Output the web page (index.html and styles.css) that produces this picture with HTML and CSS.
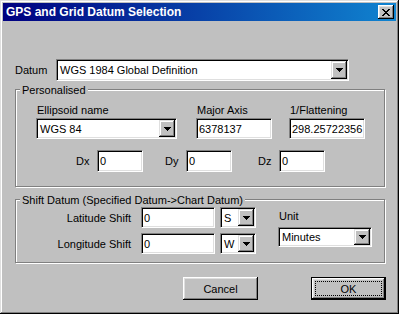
FILE: index.html
```html
<!DOCTYPE html>
<html lang="en">
<head>
    <meta charset="UTF-8">
    <title>GPS and Grid Datum Selection</title>
    <link rel="stylesheet" href="styles.css">
</head>
<body>
    <div class="window">
        <!-- Caption -->
        <div class="titlebar">
            <span class="title">GPS and Grid Datum Selection</span>
            <span class="close-btn">
                <svg width="8" height="7" viewBox="0 0 8 7" shape-rendering="crispEdges">
                    <path d="M0 0h2v1h-2zM6 0h2v1h-2zM1 1h2v1h-2zM5 1h2v1h-2zM2 2h4v1h-4zM3 3h2v1h-2zM2 4h4v1h-4zM1 5h2v1h-2zM5 5h2v1h-2zM0 6h2v1h-2zM6 6h2v1h-2z" fill="#000"/>
                </svg>
            </span>
        </div>

        <!-- Datum choice -->
        <div class="datum-row">
            <span class="datum-label">Datum</span>
            <div class="combo combo-datum">
                <span class="combo-text">WGS 1984 Global Definition</span>
                <span class="drop"><svg width="7" height="4" viewBox="0 0 7 4" shape-rendering="crispEdges"><path d="M0 0h7v1h-7zM1 1h5v1h-5zM2 2h3v1h-3zM3 3h1v1h-1z"/></svg></span>
            </div>
        </div>

        <!-- Personalised group -->
        <div class="group group-personal">
            <span class="legend">Personalised</span>
            <div class="params">
                <div class="param param-ellipsoid">
                    <span class="param-label">Ellipsoid name</span>
                    <div class="combo">
                        <span class="combo-text">WGS 84</span>
                        <span class="drop"><svg width="7" height="4" viewBox="0 0 7 4" shape-rendering="crispEdges"><path d="M0 0h7v1h-7zM1 1h5v1h-5zM2 2h3v1h-3zM3 3h1v1h-1z"/></svg></span>
                    </div>
                </div>
                <div class="param param-axis">
                    <span class="param-label">Major Axis</span>
                    <div class="edit">6378137</div>
                </div>
                <div class="param param-flat">
                    <span class="param-label">1/Flattening</span>
                    <div class="edit">298.25722356</div>
                </div>
            </div>
            <div class="deltas">
                <div class="delta"><span class="delta-label">Dx</span><div class="edit edit-small">0</div></div>
                <div class="delta delta-y"><span class="delta-label">Dy</span><div class="edit edit-small">0</div></div>
                <div class="delta delta-z"><span class="delta-label">Dz</span><div class="edit edit-small">0</div></div>
            </div>
        </div>

        <!-- Shift group -->
        <div class="group group-shift">
            <span class="legend">Shift Datum (Specified Datum-&gt;Chart Datum)</span>
            <div class="shift-rows">
                <span class="shift-label">Latitude Shift</span>
                <div class="edit edit-shift">0</div>
                <div class="combo combo-dir">
                    <span class="combo-text">S</span>
                    <span class="drop"><svg width="7" height="4" viewBox="0 0 7 4" shape-rendering="crispEdges"><path d="M0 0h7v1h-7zM1 1h5v1h-5zM2 2h3v1h-3zM3 3h1v1h-1z"/></svg></span>
                </div>
                <span class="shift-label">Longitude Shift</span>
                <div class="edit edit-shift">0</div>
                <div class="combo combo-dir">
                    <span class="combo-text">W</span>
                    <span class="drop"><svg width="7" height="4" viewBox="0 0 7 4" shape-rendering="crispEdges"><path d="M0 0h7v1h-7zM1 1h5v1h-5zM2 2h3v1h-3zM3 3h1v1h-1z"/></svg></span>
                </div>
            </div>
            <div class="unit">
                <span class="param-label">Unit</span>
                <div class="combo combo-unit">
                    <span class="combo-text">Minutes</span>
                    <span class="drop"><svg width="7" height="4" viewBox="0 0 7 4" shape-rendering="crispEdges"><path d="M0 0h7v1h-7zM1 1h5v1h-5zM2 2h3v1h-3zM3 3h1v1h-1z"/></svg></span>
                </div>
            </div>
        </div>

        <!-- Buttons -->
        <div class="buttons">
            <div class="btn"><span class="btn-face">Cancel</span></div>
            <div class="btn btn-default"><span class="btn-face btn-focus">OK</span></div>
        </div>
    </div>
</body>
</html>
```

FILE: styles.css
```css
body {
    margin: 0;
    background: #c0c0c0;
    font-family: "Liberation Sans", Arial, sans-serif;
    font-size: 11px;
    color: #000;
}

/* Dialog frame */
.window {
    width: 399px;
    height: 314px;
    box-sizing: border-box;
    padding: 3px;
    background: #c0c0c0;
    box-shadow: inset -1px -1px 0 #000, inset 1px 1px 0 #dfdfdf,
                inset -2px -2px 0 #808080, inset 2px 2px 0 #fff;
}

.titlebar {
    display: flex;
    align-items: center;
    height: 18px;
    padding: 0 2px 0 3px;
    background: linear-gradient(90deg, #000080, #1084d0);
}

.title {
    color: #fff;
    font-weight: bold;
    font-size: 12px;
}

.close-btn {
    margin-left: auto;
    width: 16px;
    height: 14px;
    box-sizing: border-box;
    display: flex;
    align-items: center;
    justify-content: center;
    background: #c0c0c0;
    box-shadow: inset -1px -1px 0 #000, inset 1px 1px 0 #fff,
                inset -2px -2px 0 #808080, inset 2px 2px 0 #dfdfdf;
}

/* Sunken controls */
.combo,
.edit {
    box-sizing: border-box;
    background: #fff;
    border: 1px solid;
    border-color: #808080 #fff #fff #808080;
    box-shadow: inset 1px 1px 0 #000, inset -1px -1px 0 #dfdfdf;
    padding: 1px;
}

.combo {
    display: flex;
    height: 21px;
}

.combo-text {
    flex: 1;
    display: flex;
    align-items: center;
    padding-left: 2px;
    white-space: nowrap;
    overflow: hidden;
}

.drop {
    width: 16px;
    display: flex;
    align-items: center;
    justify-content: center;
    background: #c0c0c0;
    box-shadow: inset -1px -1px 0 #000, inset 1px 1px 0 #dfdfdf,
                inset -2px -2px 0 #808080, inset 2px 2px 0 #fff;
}

.edit {
    display: flex;
    align-items: center;
    height: 21px;
    padding: 1px 2px;
    white-space: nowrap;
}

/* Datum row */
.datum-row {
    display: flex;
    align-items: center;
    margin: 38px 0 0 12px;
}

.datum-label {
    width: 41px;
}

.combo-datum {
    width: 293px;
    height: 22px;
}

/* Etched groups */
.group {
    position: relative;
    box-sizing: border-box;
    width: 370px;
    margin-left: 12px;
    border: 1px solid #808080;
    box-shadow: inset 1px 1px 0 #fff, 1px 1px 0 #fff;
}

.legend {
    position: absolute;
    top: -7px;
    left: 4px;
    padding: 0 2px;
    line-height: 14px;
    background: #c0c0c0;
}

.group-personal {
    margin-top: 8px;
    height: 98px;
}

.params {
    display: flex;
    padding: 14px 0 0 20px;
}

.param {
    display: flex;
    flex-direction: column;
}

.param-label {
    line-height: 13px;
    padding-left: 1px;
    margin-bottom: 1px;
}

.param-ellipsoid { width: 141px; }
.param-axis { width: 76px; margin-left: 19px; }
.param-flat { width: 76px; margin-left: 17px; }

.deltas {
    display: flex;
    align-items: center;
    margin-top: 11px;
    padding-left: 60px;
}

.delta {
    display: flex;
    align-items: center;
}

.delta-label { width: 21px; }
.delta-y { margin-left: 22px; }
.delta-z { margin-left: 26px; }

.edit-small {
    width: 46px;
    height: 22px;
}

/* Shift group */
.group-shift {
    display: flex;
    margin-top: 12px;
    height: 64px;
}

.shift-rows {
    display: grid;
    grid-template-columns: 125px 74px 41px;
    grid-auto-rows: 21px;
    row-gap: 5px;
    align-items: center;
    padding-top: 7px;
}

.shift-label {
    text-align: right;
    padding-right: 10px;
}

.edit-shift { width: 74px; }

.combo-dir {
    width: 36px;
    margin-left: 5px;
}

.unit {
    display: flex;
    flex-direction: column;
    margin-left: 22px;
    padding-top: 10px;
}

.unit .param-label {
    margin-bottom: 4px;
}

.combo-unit {
    width: 94px;
    height: 20px;
}

/* Push buttons */
.buttons {
    display: flex;
    justify-content: flex-end;
    gap: 53px;
    margin-top: 14px;
    padding-right: 10px;
}

.btn {
    display: flex;
    box-sizing: border-box;
    width: 75px;
    height: 23px;
    padding: 4px;
    background: #c0c0c0;
    box-shadow: inset -1px -1px 0 #000, inset 1px 1px 0 #fff,
                inset -2px -2px 0 #808080, inset 2px 2px 0 #dfdfdf;
}

.btn-face {
    flex: 1;
    display: flex;
    align-items: center;
    justify-content: center;
}

.btn-default {
    border: 1px solid #000;
    padding: 3px;
}

.btn-focus {
    border: 1px dotted #000;
}
```
